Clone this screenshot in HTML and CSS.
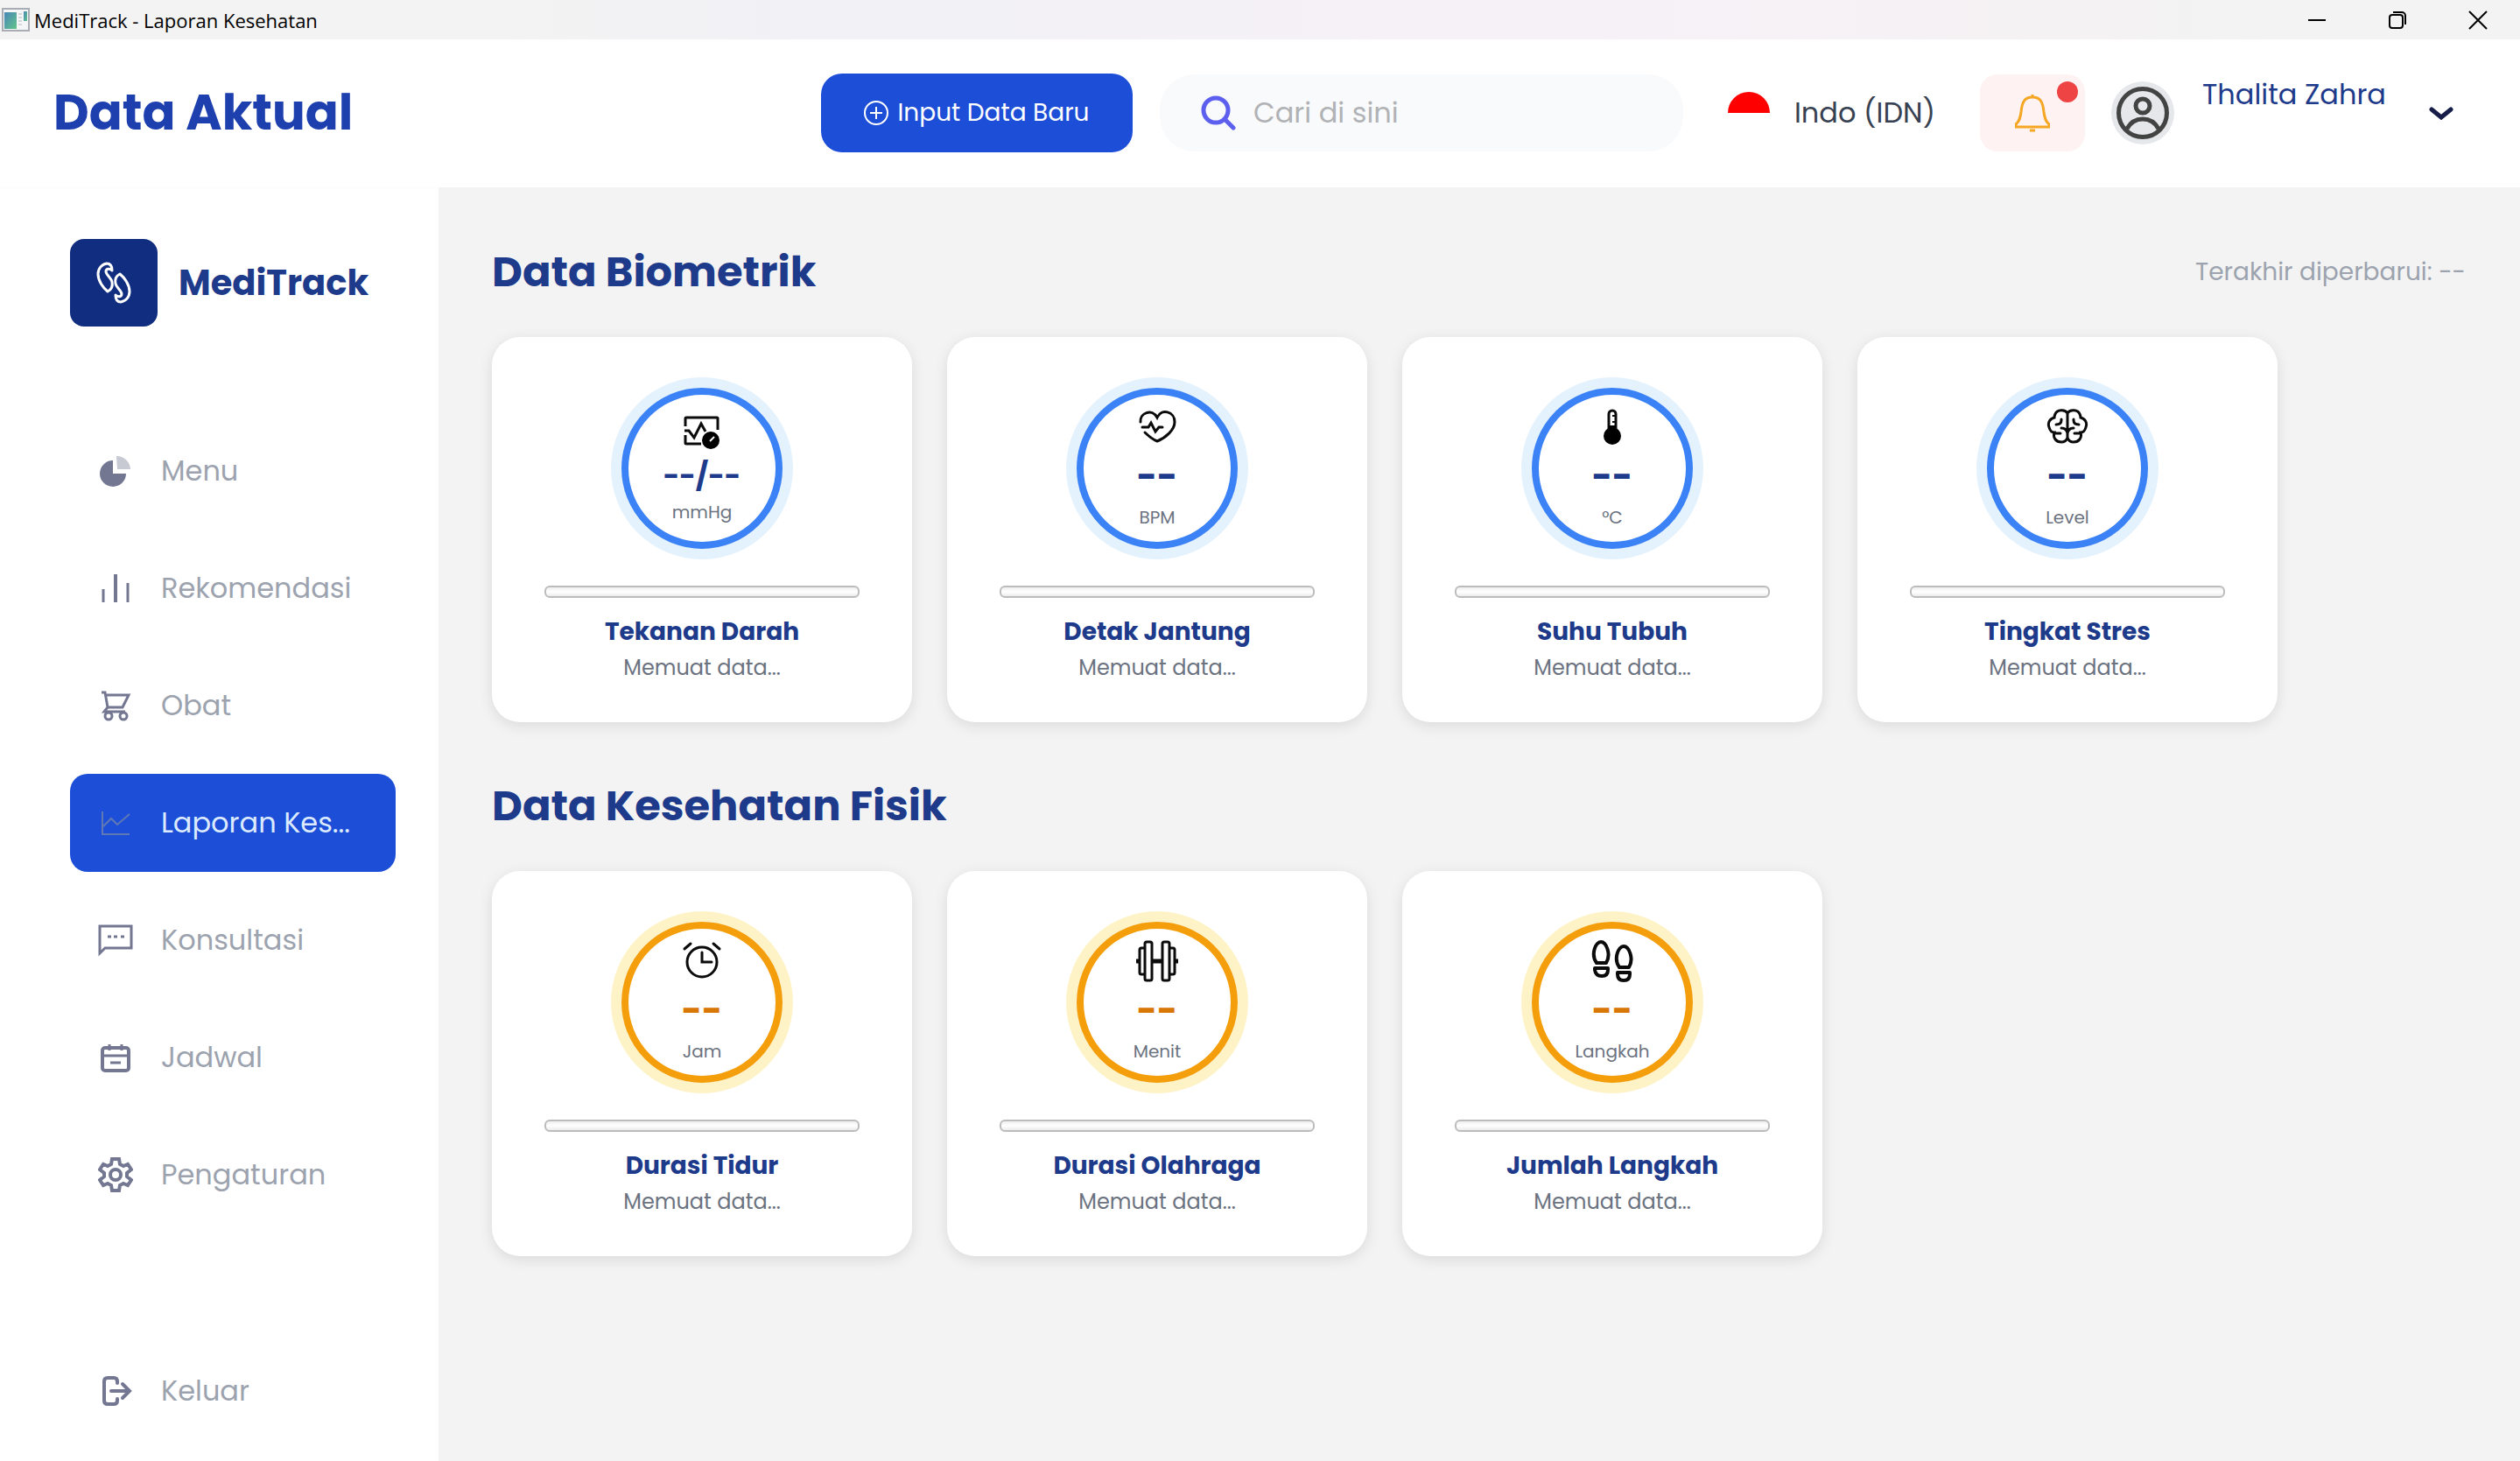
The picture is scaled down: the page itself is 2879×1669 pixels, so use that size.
FILE: index.html
```html
<!DOCTYPE html>
<html lang="id">
<head>
<meta charset="utf-8">
<meta name="viewport" content="width=device-width, initial-scale=1">
<title>MediTrack - Laporan Kesehatan</title>
<link rel="stylesheet" href="styles.css">
</head>
<body>
<div class="titlebar">
  <svg class="app-icon" viewBox="0 0 32 28" aria-hidden="true">
    <defs><linearGradient id="appfill" x1="0" y1="0" x2="1" y2="1"><stop offset="0" stop-color="#4a86b8"/><stop offset="1" stop-color="#5fc58a"/></linearGradient></defs>
    <rect x="1" y="1" width="30" height="25" fill="#f4f6f8" stroke="#a9adb3" stroke-width="2"/>
    <rect x="3" y="5" width="14" height="19" fill="url(#appfill)"/>
    <path d="M19 7h4M19 11h4M19 15h4M19 19h4" stroke="#b4b8bd" stroke-width="1"/>
    <rect x="25" y="4" width="4" height="11" fill="url(#appfill)"/>
  </svg>
  <span class="window-title">MediTrack - Laporan Kesehatan</span>
  <div class="window-controls">
    <button type="button" aria-label="Minimize"><svg viewBox="0 0 20 20"><path d="M0 10h20"/></svg></button>
    <button type="button" aria-label="Restore"><svg viewBox="0 0 20 20"><rect x="1" y="4" width="15" height="15" rx="3"/><path d="M5 1h10a4 4 0 0 1 4 4v10"/></svg></button>
    <button type="button" aria-label="Close"><svg viewBox="0 0 20 20"><path d="M0 0l20 20M20 0L0 20"/></svg></button>
  </div>
</div>

<header class="topbar">
  <h1 class="page-title">Data Aktual</h1>
  <button type="button" class="add-button">
    <svg viewBox="0 0 28 28" aria-hidden="true"><circle cx="14" cy="14" r="13"/><path d="M14 7v14M7 14h14"/></svg>
    <span>Input Data Baru</span>
  </button>
  <label class="search">
    <svg viewBox="0 0 40 40" aria-hidden="true"><circle cx="17" cy="17" r="14"/><path d="M27 27l10 10"/></svg>
    <input type="search" placeholder="Cari di sini" aria-label="Cari di sini">
  </label>
  <button type="button" class="language">
    <svg viewBox="0 0 48 48" aria-hidden="true"><path d="M0 24a24 24 0 0 1 48 0z" fill="#fe0000"/></svg>
    <span>Indo (IDN)</span>
  </button>
  <button type="button" class="bell" aria-label="Notifikasi">
    <svg viewBox="0 0 40 44" aria-hidden="true"><path d="M20 1v3M1 38h38v-3c-4-3-5-7-6-14-1-10-3-17-13-17S8 11 7 21c-1 7-2 11-6 14zM17 42h6"/></svg>
    <span class="bell-dot"></span>
  </button>
  <button type="button" class="user">
    <span class="avatar"><svg viewBox="0 0 60 60" aria-hidden="true"><circle cx="30" cy="30" r="27.500"/><circle cx="30" cy="22" r="8"/><path d="M12 48c5-9 11-11 18-11s13 2 18 11"/></svg></span>
    <span class="user-name">Thalita Zahra</span>
    <svg class="chevron" viewBox="0 0 28 16" aria-hidden="true"><path d="M3 4l11 9L25 4"/></svg>
  </button>
</header>

<div class="layout">
  <aside class="sidebar">
    <a class="brand" href="#">
      <span class="brand-mark"><svg viewBox="0 0 40 48" aria-hidden="true"><path id="leaf" d="M18 10C18 4 15 2 12 2 6 3 2 8 2 14 2 22 8 30 13 34 17 32 19 28 18 23 17 18 11 15 11 11 11 8 15 7 18 10z"/><use href="#leaf" transform="rotate(180 20 24)"/></svg></span>
      <span class="brand-name">MediTrack</span>
    </a>
    <nav class="nav">
      <a href="#"><svg viewBox="0 0 40 40" aria-hidden="true"><g stroke="none"><path d="M17 8v15h15A15 15 0 1 1 17 8z" fill="#737791"/><path d="M21 3a16 16 0 0 1 16 15H22z" fill="#c7c9d3"/></g></svg><span>Menu</span></a>
      <a href="#"><svg viewBox="0 0 40 40" aria-hidden="true"><path d="M6 21v15M34 14v22" stroke-width="3"/><path d="M20 4v32" stroke-width="4"/></svg><span>Rekomendasi</span></a>
      <a href="#"><svg viewBox="0 0 40 40" aria-hidden="true"><path stroke-width="3" d="M4 5h4l3 17-4 5h24M9 8h26l-7 14H11"/><circle cx="12" cy="32" r="4" stroke-width="3"/><circle cx="29" cy="32" r="4" stroke-width="3"/></svg><span>Obat</span></a>
      <a href="#" class="active" aria-current="page"><svg viewBox="0 0 40 40" aria-hidden="true"><path stroke-width="2" d="M5 7v26h31M6 24l9-9 7 7 14-12"/></svg><span>Laporan Kes...</span></a>
      <a href="#"><svg viewBox="0 0 40 40" aria-hidden="true"><path stroke-width="3" d="M2 4h36v25H8l-6 6z"/><path stroke-width="3" d="M11 16h4M18 16h4M26 16h4"/></svg><span>Konsultasi</span></a>
      <a href="#"><svg viewBox="0 0 40 40" aria-hidden="true"><rect x="5" y="9" width="30" height="26" rx="3" stroke-width="4"/><path stroke-width="3" d="M5 18h30M14 26h12M13 5v7M27 5v7"/></svg><span>Jadwal</span></a>
      <a href="#"><svg viewBox="0 0 40 40" aria-hidden="true"><circle cx="20" cy="20" r="6" stroke-width="4"/><path stroke-width="4" d="M16 2h8l1 6 4 2 5-2 4 6-5 4v4l5 4-4 6-5-2-4 2-1 6h-8l-1-6-4-2-5 2-4-6 5-4v-4l-5-4 4-6 5 2 4-2z"/></svg><span>Pengaturan</span></a>
      <a href="#" class="logout"><svg viewBox="0 0 40 40" aria-hidden="true"><path stroke-width="4" stroke-linecap="round" d="M22 11V9q0-4-4-4h-7q-4 0-4 4v22q0 4 4 4h7q4 0 4-4v-2M15 20h20"/><path stroke-width="4" stroke-linecap="round" d="M28 12l8 8-8 8"/></svg><span>Keluar</span></a>
    </nav>
  </aside>

  <main class="content">
    <section>
      <div class="section-head">
        <h2>Data Biometrik</h2>
        <p class="updated">Terakhir diperbarui: --</p>
      </div>
      <div class="cards">
        <article class="card">
          <div class="dial dial-compact">
            <svg viewBox="0 0 48 48" aria-hidden="true"><path d="M5 17V8q0-1 1-1h35q1 0 1 1v13M5 27v9q0 1 1 1h17" stroke-width="3"/><path d="M4 22h5l6 8 8-16 5 9" stroke-width="3"/><circle cx="34" cy="33" r="10" fill="#000" stroke="none"/><path d="M33 34l5-5" stroke="#fff" stroke-width="2"/></svg>
            <strong>--/--</strong><small>mmHg</small>
          </div>
          <progress value="0" max="100" aria-label="Tekanan Darah"></progress>
          <h3>Tekanan Darah</h3><p>Memuat data...</p>
        </article>
        <article class="card">
          <div class="dial">
            <svg viewBox="0 0 48 48" aria-hidden="true"><path stroke-width="3" stroke-linecap="round" d="M5 18C4 8 18 2 24 13C29 2 44 6 44 18C44 27 34 36 24 40C19 38 13 33 10 30M7 24h7l3-5 5 10 4-5h4"/></svg>
            <strong>--</strong><small>BPM</small>
          </div>
          <progress value="0" max="100" aria-label="Detak Jantung"></progress>
          <h3>Detak Jantung</h3><p>Memuat data...</p>
        </article>
        <article class="card">
          <div class="dial">
            <svg viewBox="0 0 48 48" aria-hidden="true"><circle cx="24" cy="34" r="10" fill="#000" stroke="none"/><path d="M20 28V9a4 4 0 0 1 8 0v19" stroke-width="3"/><path d="M20 22h8v6h-8z" fill="#000" stroke="none"/><path d="M24 11h4M24 18h4" stroke-width="2"/></svg>
            <strong>--</strong><small>°C</small>
          </div>
          <progress value="0" max="100" aria-label="Suhu Tubuh"></progress>
          <h3>Suhu Tubuh</h3><p>Memuat data...</p>
        </article>
        <article class="card">
          <div class="dial">
            <svg viewBox="0 0 48 48" aria-hidden="true"><path stroke-width="3" stroke-linecap="round" d="M24 8C21 3 12 4 10 9 9 11 9 12 9 13 4 14 1 19 3 24 4 28 6 30 9 30 7 36 11 41 17 41 20 41 23 39 24 36 25 39 28 41 31 41 37 41 41 36 39 30 42 30 44 28 45 24 47 19 44 14 39 13 39 12 39 11 38 9 36 4 27 3 24 8zM24 8v28M17 15v1q0 5-6 5M31 15v1q0 5 6 5M9 31h7M39 31h-7M17 25q6 0 7 6 1-6 7-6"/></svg>
            <strong>--</strong><small>Level</small>
          </div>
          <progress value="0" max="100" aria-label="Tingkat Stres"></progress>
          <h3>Tingkat Stres</h3><p>Memuat data...</p>
        </article>
      </div>
    </section>

    <section>
      <div class="section-head">
        <h2>Data Kesehatan Fisik</h2>
      </div>
      <div class="cards">
        <article class="card physical">
          <div class="dial">
            <svg viewBox="0 0 48 48" aria-hidden="true"><circle cx="24" cy="25" r="17" stroke-width="3"/><path stroke-width="3" stroke-linecap="round" d="M24 14v11h11M4 10l7-6M44 10l-7-6"/></svg>
            <strong>--</strong><small>Jam</small>
          </div>
          <progress value="0" max="100" aria-label="Durasi Tidur"></progress>
          <h3>Durasi Tidur</h3><p>Memuat data...</p>
        </article>
        <article class="card physical">
          <div class="dial">
            <svg viewBox="0 0 48 48" aria-hidden="true"><g stroke-width="3"><rect x="10" y="2" width="8" height="44" rx="2"/><rect x="30" y="2" width="8" height="44" rx="2"/><path d="M10 9H6q-2 0-2 2v26q0 2 2 2h4M38 9h4q2 0 2 2v26q0 2-2 2h-4"/><path d="M18 24h12M0 24h4M44 24h4" stroke-width="5"/></g></svg>
            <strong>--</strong><small>Menit</small>
          </div>
          <progress value="0" max="100" aria-label="Durasi Olahraga"></progress>
          <h3>Durasi Olahraga</h3><p>Memuat data...</p>
        </article>
        <article class="card physical">
          <div class="dial">
            <svg viewBox="0 0 48 48" aria-hidden="true"><g stroke-width="4" stroke-linejoin="round"><path d="M6 26C-1 16 5 2 11 2S23 16 17 26zM4 32h15v2q0 7-7 7T4 34z"/><path d="M32 31C25 21 31 7 37 7S49 21 43 31zM30 37h14v2q0 7-7 7t-7-7z"/></g></svg>
            <strong>--</strong><small>Langkah</small>
          </div>
          <progress value="0" max="100" aria-label="Jumlah Langkah"></progress>
          <h3>Jumlah Langkah</h3><p>Memuat data...</p>
        </article>
      </div>
    </section>
  </main>
</div>
</body>
</html>
```
FILE: styles.css
```css
* { box-sizing: border-box; }

body {
  margin: 0;
  min-height: 100vh;
  display: flex;
  flex-direction: column;
  background: #fff;
  font-family: Poppins, Inter, "Open Sans", sans-serif;
  color: #1e3a8a;
}

h1, h2, h3, p { margin: 0; }
button { border: 0; padding: 0; background: none; font: inherit; color: inherit; text-align: left; }
a { color: inherit; text-decoration: none; }
svg { display: block; flex: none; fill: none; stroke: currentColor; }

/* Window title bar */
.titlebar {
  height: 45px;
  display: flex;
  align-items: center;
  gap: 5px;
  padding: 0 0 0 2px;
  background: linear-gradient(90deg, #f3f3f3 20%, #f1f1f6 33%, #f6f1f7 60%, #f5f2f4 80%, #f3f3f3 90%);
  color: #000;
}
.app-icon { width: 32px; height: 28px; stroke: none; }
.window-title { flex: 1; font: 22px/32px "Open Sans", "Noto Sans", sans-serif; }
.window-controls { display: flex; padding-right: 2px; }
.window-controls button { width: 92px; height: 45px; display: grid; place-items: center; }
.window-controls svg { width: 20px; height: 20px; stroke-width: 2; overflow: visible; }

/* Header */
.topbar {
  height: 169px;
  display: flex;
  align-items: center;
  padding: 0 64px 1px 61px;
  box-shadow: 0 1px 2px rgba(0, 0, 0, 0.02);
}
.page-title { flex: 1; font-size: 56px; line-height: 72px; color: #1e40af; }
.add-button {
  width: 356px;
  height: 90px;
  margin-right: 31px;
  display: flex;
  align-items: center;
  justify-content: center;
  gap: 10px;
  border-radius: 24px;
  background: #1d4ed8;
  color: #fff;
  font-size: 28px;
}
.add-button svg { width: 28px; height: 28px; stroke-width: 2; }
.search {
  width: 598px;
  height: 88px;
  margin-right: 51px;
  display: flex;
  align-items: center;
  gap: 20px;
  padding: 0 47px;
  border-radius: 40px;
  background: #f9fafb;
}
.search svg { width: 40px; height: 40px; stroke: #5d5fef; stroke-width: 5; stroke-linecap: round; }
.search input {
  flex: 1;
  min-width: 0;
  padding: 0;
  border: 0;
  outline: 0;
  background: none;
  font: inherit;
  font-size: 32px;
}
.search input::placeholder { color: #b0b2b5; opacity: 1; }
.language {
  width: 288px;
  display: flex;
  align-items: center;
  gap: 28px;
  color: #374151;
  font-size: 32px;
}
.language svg { width: 48px; height: 48px; stroke: none; }
.bell {
  position: relative;
  width: 120px;
  height: 88px;
  margin-right: 30px;
  display: grid;
  place-items: center;
  border-radius: 20px;
  background: #fef2f2;
}
.bell svg { width: 40px; height: 44px; stroke: #f5a623; stroke-width: 3; }
.bell-dot {
  position: absolute;
  top: 8px;
  right: 8px;
  width: 24px;
  height: 24px;
  border-radius: 50%;
  background: #ef4444;
}
.user { display: flex; align-items: center; font-size: 32px; }
.avatar {
  width: 72px;
  height: 72px;
  margin-right: 32px;
  display: grid;
  place-items: center;
  border-radius: 50%;
  background: #e5e7eb;
}
.avatar svg { width: 60px; height: 60px; stroke: #434343; stroke-width: 5; }
.user-name { width: 259px; line-height: 48px; padding-bottom: 42px; }
.chevron { width: 28px; height: 16px; margin-right: 12px; stroke: #151d48; stroke-width: 5; stroke-linecap: round; }

/* Page body */
.layout { flex: 1; display: flex; }

.sidebar {
  flex: none;
  width: 501px;
  display: flex;
  flex-direction: column;
  padding: 59px 49px 24px 80px;
}
.brand { display: flex; align-items: center; gap: 24px; margin-bottom: 109px; }
.brand-mark {
  width: 100px;
  height: 100px;
  display: grid;
  place-items: center;
  border-radius: 16px;
  background: #112d7f;
  color: #fff;
}
.brand-mark svg { width: 40px; height: 48px; stroke-width: 3; stroke-linejoin: round; }
.brand-name { font-size: 40px; font-weight: 700; }

.nav { flex: 1; display: flex; flex-direction: column; gap: 22px; }
.nav a {
  height: 112px;
  display: flex;
  align-items: center;
  gap: 32px;
  padding: 0 32px;
  border-radius: 20px;
  color: #9ca3af;
  font-size: 32px;
}
.nav svg { width: 40px; height: 40px; stroke: #737791; }
.nav span { white-space: nowrap; line-height: 48px; }
.nav .active { background: #1d4ed8; color: #dbeafe; }
.nav .active svg { stroke: #6078b4; }
.nav .logout { margin-top: auto; }

.content {
  flex: 1;
  display: flex;
  flex-direction: column;
  gap: 60px;
  padding: 61px 62px 60px 61px;
  background: #f3f3f3;
}
.section-head {
  display: flex;
  align-items: center;
  justify-content: space-between;
  margin-bottom: 38px;
}
.section-head h2 { font-size: 48px; line-height: 72px; }
.updated { color: #9ca3af; font-size: 28px; }

.cards { display: flex; flex-wrap: wrap; gap: 40px; }
.card {
  width: 480px;
  display: flex;
  flex-direction: column;
  align-items: center;
  padding: 58px 60px 44px;
  border-radius: 32px;
  background: #fff;
  box-shadow: 0 4px 16px rgba(0, 0, 0, 0.1);
}
.dial {
  width: 184px;
  height: 184px;
  display: flex;
  flex-direction: column;
  align-items: center;
  justify-content: center;
  border: 8px solid #3b82f6;
  border-radius: 50%;
  box-shadow: 0 0 0 12px #e3f2fd;
}
.dial svg { width: 48px; height: 48px; stroke: #0b0b0b; }
.dial strong { font-size: 40px; line-height: 64px; }
.dial small { font-size: 20px; line-height: 30px; color: #6b7280; }
.dial-compact strong { font-size: 32px; line-height: 52px; }
.physical .dial { border-color: #f59e0b; box-shadow: 0 0 0 12px #fef3c7; }
.physical strong { color: #d97706; }

progress {
  appearance: none;
  width: 100%;
  height: 14px;
  margin: 42px 0 18px;
  border: 2px solid #bcbcbc;
  border-radius: 6px;
  background: linear-gradient(#eee, #fff 50%, #ececec);
}
progress::-webkit-progress-bar { background: transparent; }
progress::-webkit-progress-value { border-radius: 4px; background: #3b82f6; }

.card h3 { font-size: 28px; line-height: 42px; }
.card p { margin-top: 2px; font-size: 24px; line-height: 36px; color: #6b7280; }
```
